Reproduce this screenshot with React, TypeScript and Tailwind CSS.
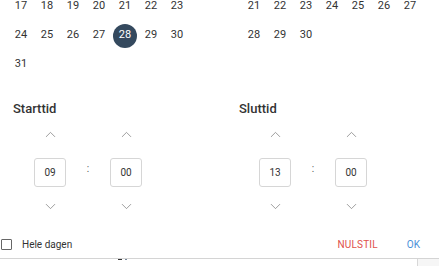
import { ChevronDown, ChevronUp } from 'lucide-react';

const leftRows: (number | null)[][] = [
    [17, 18, 19, 20, 21, 22, 23],
    [24, 25, 26, 27, 28, 29, 30],
    [31, null, null, null, null, null, null],
];

const rightRows: (number | null)[][] = [
    [21, 22, 23, 24, 25, 26, 27],
    [28, 29, 30, null, null, null, null],
    [null, null, null, null, null, null, null],
];

function MonthGrid({ rows, selected }: { rows: (number | null)[][]; selected?: number }) {
    return (
        <div className="grid grid-cols-[repeat(7,26px)] auto-rows-[29px]">
            {rows.flat().map((d, i) => (
                <div key={i} className="flex items-center justify-center">
                    {d === selected ? (
                        <span className="w-6 h-6 rounded-full bg-[#34495e] text-white flex items-center justify-center">{d}</span>
                    ) : (
                        <span>{d ?? ''}</span>
                    )}
                </div>
            ))}
        </div>
    );
}

function Spinner({ value }: { value: string }) {
    return (
        <div className="flex flex-col items-center w-8">
            <button className="h-6 w-8 flex items-center justify-center text-[#777]">
                <ChevronUp size={17} strokeWidth={1} />
            </button>
            <div className="mt-[12px] h-[29px] w-8 border border-[#d6d6d6] rounded-[3px] flex items-center justify-center text-[10px] text-[#333]">
                {value}
            </div>
            <button className="mt-[7px] h-6 w-8 flex items-center justify-center text-[#777]">
                <ChevronDown size={17} strokeWidth={1} />
            </button>
        </div>
    );
}

function TimePicker({ hours, minutes }: { hours: string; minutes: string }) {
    return (
        <div className="flex items-start gap-4">
            <Spinner value={hours} />
            <div className="w-3 h-[66px] flex items-end justify-center pb-[12px] text-[10px] text-[#555]">:</div>
            <Spinner value={minutes} />
        </div>
    );
}

export default function App() {
    return (
        <div
            className="w-[439px] h-[266px] overflow-hidden bg-white text-[#333] relative"
            style={{ fontFamily: 'Roboto, "Liberation Sans", sans-serif' }}
        >
            {/* calendars */}
            <div className="flex -mt-[8px] text-[11px] text-[#333]">
                <div className="ml-[8px]">
                    <MonthGrid rows={leftRows} selected={28} />
                </div>
                <div className="ml-[51px]">
                    <MonthGrid rows={rightRows} />
                </div>
            </div>

            {/* times */}
            <div className="flex mt-[22px]">
                <div className="w-[226px]">
                    <div className="pl-[13px] text-[13px] font-medium text-[#333] leading-4">Starttid</div>
                    <div className="pl-[34px] mt-[5px]">
                        <TimePicker hours="09" minutes="00" />
                    </div>
                </div>
                <div>
                    <div className="pl-[13px] text-[13px] font-medium text-[#333] leading-4">Sluttid</div>
                    <div className="pl-[33px] mt-[5px]">
                        <TimePicker hours="13" minutes="00" />
                    </div>
                </div>
            </div>

            {/* footer */}
            <div className="flex items-center h-[20px] mt-[16px] text-[10px]">
                <label className="flex items-center gap-[10px] pl-[1px]">
                    <span className="w-[11px] h-[11px] border border-[#666] rounded-[1px] bg-white" />
                    <span className="text-[#333]">Hele dagen</span>
                </label>
                <div className="ml-auto flex items-center gap-[29px] pr-[19px]">
                    <button className="text-[#e0504a] tracking-[0.2px]">NULSTIL</button>
                    <button className="text-[#4a90d9]">OK</button>
                </div>
            </div>

            {/* bottom edge of next element */}
            <div className="absolute left-0 right-0 top-[258px] h-[8px] border-t-[1.5px] border-[#d4d4d4] flex">
                <div className="ml-[118px] flex gap-[3px]">
                    <span className="w-[4px] h-[1px] bg-[#333]" />
                    <span className="w-[2px] h-[1px] bg-[#789]" />
                </div>
                <div className="ml-auto w-[22px] h-full border-l border-[#d8d8d8] bg-[#f6f6f6]" />
            </div>
        </div>
    );
}
